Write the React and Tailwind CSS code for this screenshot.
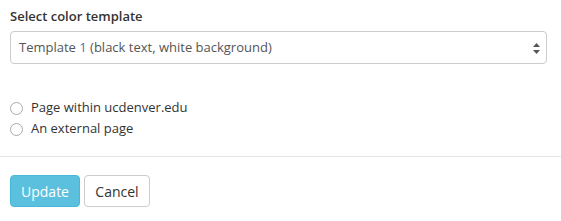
import React from "react";

const App = () => {
  return (
    <div
      className="w-[561px] h-[221px] bg-white text-[#333] text-[13px]"
      style={{ fontFamily: '"Open Sans", sans-serif' }}
    >
      <div className="px-[10px] pt-[7px]">
        {/* Template select */}
        <label className="block font-semibold text-[13px] leading-[18px] mb-[6px]">
          Select color template
        </label>
        <div className="relative w-[537px] h-[33px] border border-[#ccc] rounded-[4px] flex items-center pl-[8px]">
          <span className="text-[#555]">
            Template <span className="text-[#337ab7]">1</span> (black text, white background)
          </span>
          <svg
            className="absolute right-[6px] top-[11px]"
            width="7"
            height="11"
            viewBox="0 0 7 11"
          >
            <path d="M3.5 0 L7 4 L0 4 Z" fill="#555" />
            <path d="M0 7 L7 7 L3.5 11 Z" fill="#555" />
          </svg>
        </div>

        {/* Link type */}
        <div className="mt-[35px] flex flex-col gap-[3px]">
          <label className="flex items-center gap-[8px] h-[18px]">
            <span className="w-[13px] h-[13px] rounded-full border border-[#aaa] bg-white" />
            <span>Page within ucdenver.edu</span>
          </label>
          <label className="flex items-center gap-[8px] h-[18px]">
            <span className="w-[13px] h-[13px] rounded-full border border-[#aaa] bg-white" />
            <span>An external page</span>
          </label>
        </div>
      </div>

      <div className="mt-[18px] border-t border-[#e5e5e5]" />

      {/* Actions */}
      <div className="px-[10px] pt-[18px] flex gap-[4px]">
        <button className="h-[32px] w-[70px] rounded-[4px] bg-[#5bc0de] border border-[#46b8da] text-white text-[14px]">
          Update
        </button>
        <button className="h-[32px] w-[66px] rounded-[4px] bg-white border border-[#ccc] text-[#333] text-[14px]">
          Cancel
        </button>
      </div>
    </div>
  );
};

export default App;
